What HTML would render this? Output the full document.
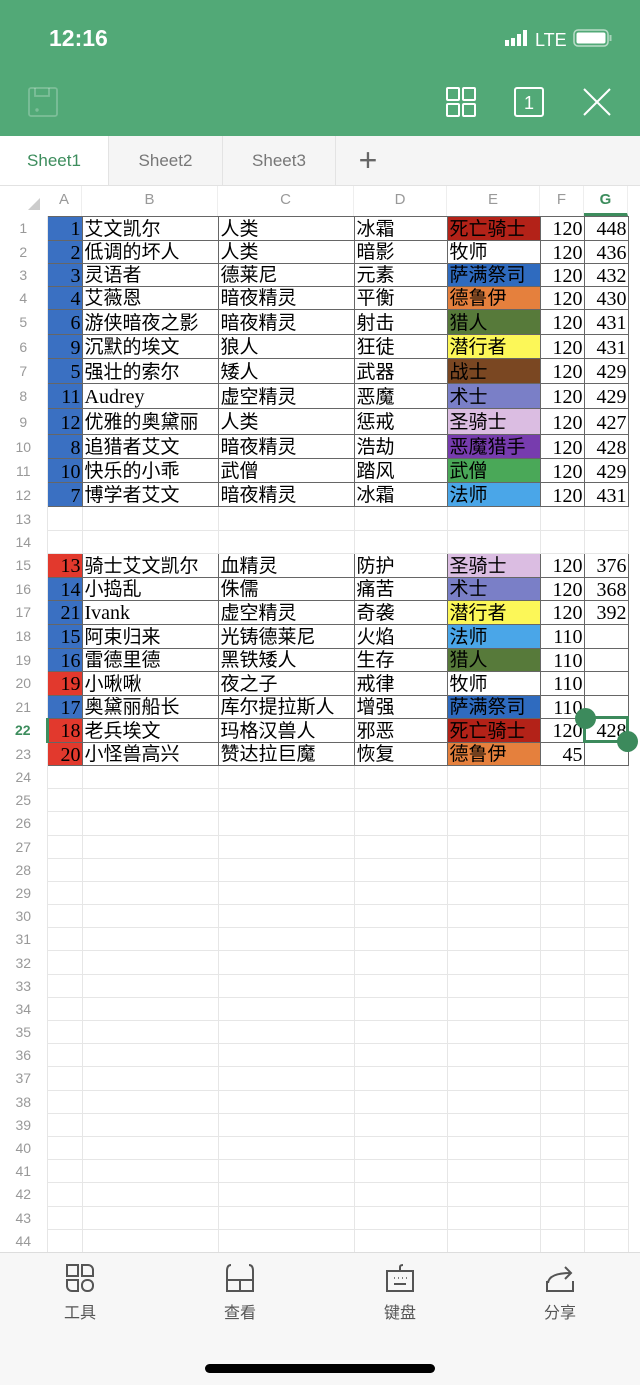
<!DOCTYPE html>
<html><head><meta charset="utf-8"><style>
*{margin:0;padding:0;box-sizing:border-box}
body{width:640px;height:1385px;position:relative;overflow:hidden;background:#fff;font-family:"Liberation Sans","Noto Sans CJK SC",sans-serif}
.hdr{position:absolute;left:0;top:0;width:640px;height:136px;background:#52a977}
.time{position:absolute;left:49px;top:25px;color:#fff;font-size:23px;font-weight:bold}
.tabs{position:absolute;left:0;top:136px;width:640px;height:50px;background:#f5f5f5;border-bottom:1px solid #e2e2e2}
.tab{position:absolute;top:0;height:49px;line-height:50px;text-align:center;font-size:17px;color:#777;border-right:1px solid #e3e3e3}
.colh{position:absolute;top:186px;left:0;width:640px;height:30px;background:#fff}
.colh div{position:absolute;top:0;height:30px;line-height:28px;text-align:center;font-size:15px;color:#999;border-right:1px solid #eee}
table{position:absolute;left:0;top:216px;border-collapse:collapse;table-layout:fixed}
td{border:1px solid #e6e6e6;padding:2px 1px 0 2px;font-size:19px;white-space:nowrap;overflow:hidden;font-family:"Liberation Sans","Noto Sans CJK SC",sans-serif;color:#000;line-height:1}
td.rh{border:none;border-right:1px solid #e6e6e6;text-align:center;font-size:14px;color:#999;font-family:"Liberation Sans",sans-serif;padding:0}
tr.d td:not(.rh){border:1px solid #666}
td.n{text-align:right;font-family:"Liberation Serif",serif;font-size:20px;padding-right:1px}
td.b{background:#3a70c2}td.r{background:#e2392d}
.tb{position:absolute;left:0;top:1252px;width:640px;height:133px;background:#f7f7f7;border-top:1px solid #ddd}
.ti{position:absolute;top:10px;width:80px;text-align:center;font-size:16px;color:#555}
.ti svg{display:block;margin:0 auto 6px}
</style></head><body>
<div class="hdr">
<div class="time">12:16</div>
<svg style="position:absolute;left:503px;top:28px" width="112" height="22" viewBox="0 0 112 22">
<rect x="2" y="12" width="4" height="6" fill="#fff"/><rect x="8" y="10" width="4" height="8" fill="#fff"/><rect x="14" y="6" width="4" height="12" fill="#fff"/><rect x="20" y="2" width="4" height="16" fill="#fff"/>
<text x="32" y="18" fill="#fff" font-size="18" font-family="Liberation Sans">LTE</text>
<rect x="71" y="2" width="34" height="16" rx="4" fill="none" stroke="#fff" stroke-opacity=".6" stroke-width="1.5"/><rect x="73.5" y="4.5" width="29" height="11" rx="2" fill="#fff"/><rect x="106.5" y="7" width="2" height="6" fill="#fff" fill-opacity=".5"/></svg>
<svg style="position:absolute;left:28px;top:87px" width="30" height="30" viewBox="0 0 30 30" fill="none" stroke="#fff" stroke-opacity=".25" stroke-width="1.8"><rect x="1" y="1" width="28" height="28" rx="2"/><path d="M7 1v8h14V1"/><circle cx="9" cy="23" r=".8"/></svg>
<svg style="position:absolute;left:446px;top:87px" width="30" height="30" viewBox="0 0 30 30" fill="none" stroke="#fff" stroke-width="2"><rect x="1" y="1" width="12" height="12" rx="1"/><rect x="17" y="1" width="12" height="12" rx="1"/><rect x="1" y="17" width="12" height="12" rx="1"/><rect x="17" y="17" width="12" height="12" rx="1"/></svg>
<svg style="position:absolute;left:514px;top:87px" width="30" height="30" viewBox="0 0 30 30"><rect x="1" y="1" width="28" height="28" rx="2" fill="none" stroke="#fff" stroke-width="2"/><text x="15" y="22" fill="#fff" font-size="18" text-anchor="middle" font-family="Liberation Sans">1</text></svg>
<svg style="position:absolute;left:582px;top:87px" width="30" height="30" viewBox="0 0 30 30" stroke="#fff" stroke-width="2"><path d="M2 2L28 28M28 2L2 28"/></svg>
</div>
<div class="tabs">
<div class="tab" style="left:0;width:109px;background:#fff;color:#3d8d5d">Sheet1</div>
<div class="tab" style="left:109px;width:114px">Sheet2</div>
<div class="tab" style="left:223px;width:113px">Sheet3</div>
<div class="tab" style="left:336px;width:64px;border:none;font-size:32px;color:#666;line-height:48px;font-weight:300">+</div>
</div>
<div class="colh">
<svg style="position:absolute;left:28px;top:12px" width="12" height="12"><path d="M12 0V12H0Z" fill="#ccc"/></svg>
<div style="left:47px;width:35px">A</div><div style="left:82px;width:136px">B</div><div style="left:218px;width:136px">C</div><div style="left:354px;width:93px">D</div><div style="left:447px;width:93px">E</div><div style="left:540px;width:44px">F</div><div style="left:584px;width:44px;color:#3d8d5d;font-weight:bold;border-bottom:3px solid #3d8d5d">G</div>
</div>
<table>
<colgroup><col style="width:47px"><col style="width:35px"><col style="width:136px"><col style="width:136px"><col style="width:93px"><col style="width:93px"><col style="width:44px"><col style="width:44px"><col style="width:12px"></colgroup>
<tr class="d" style="height:23.5px"><td class="rh">1</td><td class="n b">1</td><td>艾文凯尔</td><td>人类</td><td>冰霜</td><td style="background:#b32218">死亡骑士</td><td class="n">120</td><td class="n">448</td><td style="border:none"></td></tr>
<tr class="d" style="height:23px"><td class="rh">2</td><td class="n b">2</td><td>低调的坏人</td><td>人类</td><td>暗影</td><td>牧师</td><td class="n">120</td><td class="n">436</td><td style="border:none"></td></tr>
<tr class="d" style="height:23px"><td class="rh">3</td><td class="n b">3</td><td>灵语者</td><td>德莱尼</td><td>元素</td><td style="background:#2f6bbf">萨满祭司</td><td class="n">120</td><td class="n">432</td><td style="border:none"></td></tr>
<tr class="d" style="height:23.5px"><td class="rh">4</td><td class="n b">4</td><td>艾薇恩</td><td>暗夜精灵</td><td>平衡</td><td style="background:#e5803d">德鲁伊</td><td class="n">120</td><td class="n">430</td><td style="border:none"></td></tr>
<tr class="d" style="height:25px"><td class="rh">5</td><td class="n b">6</td><td>游侠暗夜之影</td><td>暗夜精灵</td><td>射击</td><td style="background:#577a3a">猎人</td><td class="n">120</td><td class="n">431</td><td style="border:none"></td></tr>
<tr class="d" style="height:24px"><td class="rh">6</td><td class="n b">9</td><td>沉默的埃文</td><td>狼人</td><td>狂徒</td><td style="background:#fcf758">潜行者</td><td class="n">120</td><td class="n">431</td><td style="border:none"></td></tr>
<tr class="d" style="height:25px"><td class="rh">7</td><td class="n b">5</td><td>强壮的索尔</td><td>矮人</td><td>武器</td><td style="background:#7a4722">战士</td><td class="n">120</td><td class="n">429</td><td style="border:none"></td></tr>
<tr class="d" style="height:25px"><td class="rh">8</td><td class="n b">11</td><td style="font-family:'Liberation Serif',serif;font-size:20px">Audrey</td><td>虚空精灵</td><td>恶魔</td><td style="background:#7a7fc7">术士</td><td class="n">120</td><td class="n">429</td><td style="border:none"></td></tr>
<tr class="d" style="height:26px"><td class="rh">9</td><td class="n b">12</td><td>优雅的奥黛丽</td><td>人类</td><td>惩戒</td><td style="background:#dbbde2">圣骑士</td><td class="n">120</td><td class="n">427</td><td style="border:none"></td></tr>
<tr class="d" style="height:24px"><td class="rh">10</td><td class="n b">8</td><td>追猎者艾文</td><td>暗夜精灵</td><td>浩劫</td><td style="background:#773cae">恶魔猎手</td><td class="n">120</td><td class="n">428</td><td style="border:none"></td></tr>
<tr class="d" style="height:24px"><td class="rh">11</td><td class="n b">10</td><td>快乐的小乖</td><td>武僧</td><td>踏风</td><td style="background:#4aa858">武僧</td><td class="n">120</td><td class="n">429</td><td style="border:none"></td></tr>
<tr class="d" style="height:24px"><td class="rh">12</td><td class="n b">7</td><td>博学者艾文</td><td>暗夜精灵</td><td>冰霜</td><td style="background:#4aa6e8">法师</td><td class="n">120</td><td class="n">431</td><td style="border:none"></td></tr>
<tr style="height:24px"><td class="rh">13</td><td></td><td></td><td></td><td></td><td></td><td></td><td></td><td style="border:none"></td></tr>
<tr style="height:23px"><td class="rh">14</td><td></td><td></td><td></td><td></td><td></td><td></td><td></td><td style="border:none"></td></tr>
<tr class="d" style="height:23.7px"><td class="rh">15</td><td class="n r">13</td><td>骑士艾文凯尔</td><td>血精灵</td><td>防护</td><td style="background:#dbbde2">圣骑士</td><td class="n">120</td><td class="n">376</td><td style="border:none"></td></tr>
<tr class="d" style="height:23.3px"><td class="rh">16</td><td class="n b">14</td><td>小捣乱</td><td>侏儒</td><td>痛苦</td><td style="background:#7a7fc7">术士</td><td class="n">120</td><td class="n">368</td><td style="border:none"></td></tr>
<tr class="d" style="height:24px"><td class="rh">17</td><td class="n b">21</td><td style="font-family:'Liberation Serif',serif;font-size:20px">Ivank</td><td>虚空精灵</td><td>奇袭</td><td style="background:#fcf758">潜行者</td><td class="n">120</td><td class="n">392</td><td style="border:none"></td></tr>
<tr class="d" style="height:23.7px"><td class="rh">18</td><td class="n b">15</td><td>阿束归来</td><td>光铸德莱尼</td><td>火焰</td><td style="background:#4aa6e8">法师</td><td class="n">110</td><td></td><td style="border:none"></td></tr>
<tr class="d" style="height:23.3px"><td class="rh">19</td><td class="n b">16</td><td>雷德里德</td><td>黑铁矮人</td><td>生存</td><td style="background:#577a3a">猎人</td><td class="n">110</td><td></td><td style="border:none"></td></tr>
<tr class="d" style="height:23.7px"><td class="rh">20</td><td class="n r">19</td><td>小啾啾</td><td>夜之子</td><td>戒律</td><td>牧师</td><td class="n">110</td><td></td><td style="border:none"></td></tr>
<tr class="d" style="height:23.3px"><td class="rh">21</td><td class="n b">17</td><td>奥黛丽船长</td><td>库尔提拉斯人</td><td>增强</td><td style="background:#2f6bbf">萨满祭司</td><td class="n">110</td><td></td><td style="border:none"></td></tr>
<tr class="d" style="height:23.7px"><td class="rh" style="color:#3d8d5d;font-weight:bold;border-right:3px solid #3d8d5d">22</td><td class="n r">18</td><td>老兵埃文</td><td>玛格汉兽人</td><td>邪恶</td><td style="background:#b32218">死亡骑士</td><td class="n">120</td><td class="n">428</td><td style="border:none"></td></tr>
<tr class="d" style="height:23.3px"><td class="rh">23</td><td class="n r">20</td><td>小怪兽高兴</td><td>赞达拉巨魔</td><td>恢复</td><td style="background:#e5803d">德鲁伊</td><td class="n">45</td><td></td><td style="border:none"></td></tr>
<tr style="height:23.2px"><td class="rh">24</td><td></td><td></td><td></td><td></td><td></td><td></td><td></td><td style="border:none"></td></tr>
<tr style="height:23.2px"><td class="rh">25</td><td></td><td></td><td></td><td></td><td></td><td></td><td></td><td style="border:none"></td></tr>
<tr style="height:23.2px"><td class="rh">26</td><td></td><td></td><td></td><td></td><td></td><td></td><td></td><td style="border:none"></td></tr>
<tr style="height:23.2px"><td class="rh">27</td><td></td><td></td><td></td><td></td><td></td><td></td><td></td><td style="border:none"></td></tr>
<tr style="height:23.2px"><td class="rh">28</td><td></td><td></td><td></td><td></td><td></td><td></td><td></td><td style="border:none"></td></tr>
<tr style="height:23.2px"><td class="rh">29</td><td></td><td></td><td></td><td></td><td></td><td></td><td></td><td style="border:none"></td></tr>
<tr style="height:23.2px"><td class="rh">30</td><td></td><td></td><td></td><td></td><td></td><td></td><td></td><td style="border:none"></td></tr>
<tr style="height:23.2px"><td class="rh">31</td><td></td><td></td><td></td><td></td><td></td><td></td><td></td><td style="border:none"></td></tr>
<tr style="height:23.2px"><td class="rh">32</td><td></td><td></td><td></td><td></td><td></td><td></td><td></td><td style="border:none"></td></tr>
<tr style="height:23.2px"><td class="rh">33</td><td></td><td></td><td></td><td></td><td></td><td></td><td></td><td style="border:none"></td></tr>
<tr style="height:23.2px"><td class="rh">34</td><td></td><td></td><td></td><td></td><td></td><td></td><td></td><td style="border:none"></td></tr>
<tr style="height:23.2px"><td class="rh">35</td><td></td><td></td><td></td><td></td><td></td><td></td><td></td><td style="border:none"></td></tr>
<tr style="height:23.2px"><td class="rh">36</td><td></td><td></td><td></td><td></td><td></td><td></td><td></td><td style="border:none"></td></tr>
<tr style="height:23.2px"><td class="rh">37</td><td></td><td></td><td></td><td></td><td></td><td></td><td></td><td style="border:none"></td></tr>
<tr style="height:23.2px"><td class="rh">38</td><td></td><td></td><td></td><td></td><td></td><td></td><td></td><td style="border:none"></td></tr>
<tr style="height:23.2px"><td class="rh">39</td><td></td><td></td><td></td><td></td><td></td><td></td><td></td><td style="border:none"></td></tr>
<tr style="height:23.2px"><td class="rh">40</td><td></td><td></td><td></td><td></td><td></td><td></td><td></td><td style="border:none"></td></tr>
<tr style="height:23.2px"><td class="rh">41</td><td></td><td></td><td></td><td></td><td></td><td></td><td></td><td style="border:none"></td></tr>
<tr style="height:23.2px"><td class="rh">42</td><td></td><td></td><td></td><td></td><td></td><td></td><td></td><td style="border:none"></td></tr>
<tr style="height:23.2px"><td class="rh">43</td><td></td><td></td><td></td><td></td><td></td><td></td><td></td><td style="border:none"></td></tr>
<tr style="height:23.2px"><td class="rh">44</td><td></td><td></td><td></td><td></td><td></td><td></td><td></td><td style="border:none"></td></tr>
</table>
<div style="position:absolute;left:583px;top:716px;width:46px;height:27px;border:3px solid #3c8a5c"></div>
<div style="position:absolute;left:575px;top:708px;width:21px;height:21px;border-radius:50%;background:#3c8a5c"></div>
<div style="position:absolute;left:617px;top:731px;width:21px;height:21px;border-radius:50%;background:#3c8a5c"></div>
<div class="tb">
<div class="ti" style="left:40px"><svg width="30" height="30" viewBox="0 0 30 30" fill="none" stroke="#555" stroke-width="2"><rect x="2" y="2" width="11" height="11"/><path d="M17 2h6a5 5 0 0 1 5 5v6h-11z"/><path d="M2 17h11v11H7a5 5 0 0 1-5-5z"/><rect x="17" y="17" width="11" height="11" rx="5"/></svg>工具</div>
<div class="ti" style="left:200px"><svg width="30" height="30" viewBox="0 0 30 30" fill="none" stroke="#555" stroke-width="2"><path d="M6 2Q2 2 2 8V28H28V8Q28 2 24 2"/><path d="M2 17H28M15 17V28"/></svg>查看</div>
<div class="ti" style="left:360px"><svg width="30" height="30" viewBox="0 0 30 30" fill="none" stroke="#555" stroke-width="2"><rect x="2" y="8" width="26" height="20"/><path d="M15 8V4Q15 2 18 2"/><path d="M9 21H21"/><path d="M9 15h1M13 15h1M17 15h1M21 15h1" stroke-width="1.5"/></svg>键盘</div>
<div class="ti" style="left:520px"><svg width="30" height="30" viewBox="0 0 30 30" fill="none" stroke="#555" stroke-width="2"><path d="M2 18V28H28V18"/><path d="M3 20Q4 10 26 10"/><path d="M20 4L26 10L20 16"/></svg>分享</div>
<div style="position:absolute;left:205px;top:111px;width:230px;height:9px;border-radius:5px;background:#000"></div>
</div>
</body></html>
